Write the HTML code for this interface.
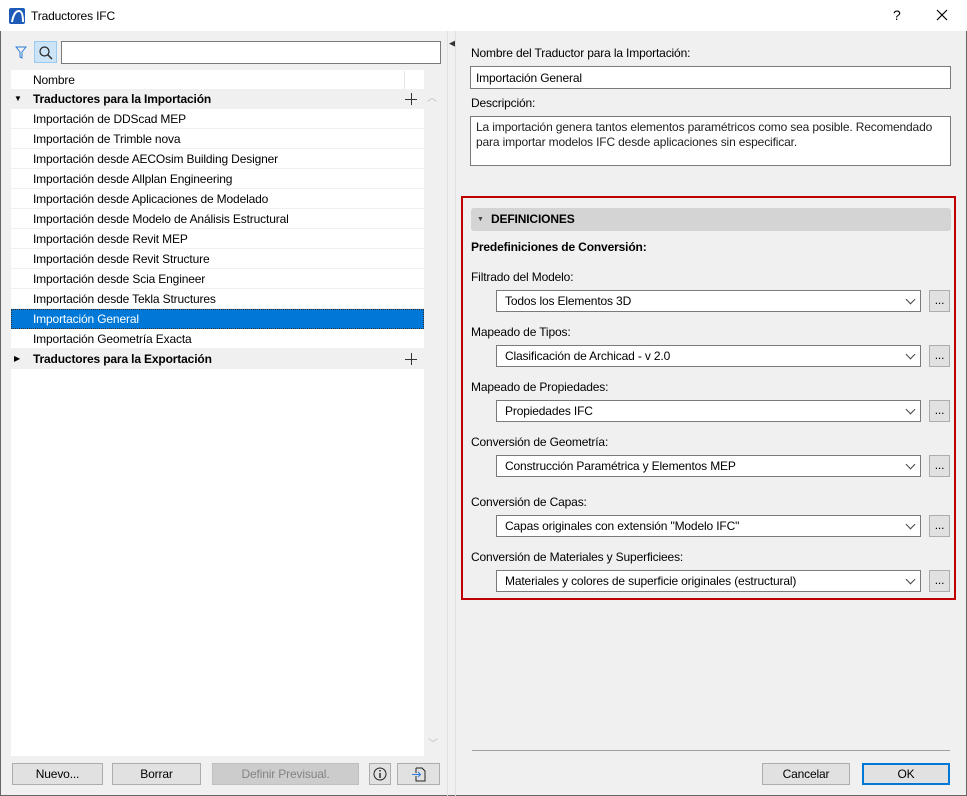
<!DOCTYPE html><html><head><meta charset="utf-8"><style>
*{box-sizing:border-box;margin:0;padding:0}
body{width:967px;height:796px;background:#f0f0f0;font-family:"Liberation Sans",sans-serif;font-size:12px;letter-spacing:-0.15px;color:#000;position:relative;overflow:hidden}
.a{position:absolute}
.t{position:absolute;white-space:nowrap;line-height:14px}
.row{position:absolute;left:11px;width:413px;height:20px;line-height:20px;padding-left:22px;border-bottom:1px solid #f0f0f0;background:#fff;white-space:nowrap}
.grp{background:#f0f0f0;font-weight:bold}
.inp{position:absolute;background:#fff;border:1px solid #7a7a7a}
.sel{position:absolute;left:496px;width:425px;height:22px;background:#fff;border:1px solid #7a7a7a;padding-left:8px;line-height:20px}
.sel:after{content:"";position:absolute;right:6px;top:5px;width:6px;height:6px;border-right:1px solid #444;border-bottom:1px solid #444;transform:rotate(45deg)}
.dots{position:absolute;left:929px;width:21px;height:22px;background:#e1e1e1;border:1px solid #adadad;text-align:center;line-height:18px}
.btn{position:absolute;top:763px;height:22px;background:#e1e1e1;border:1px solid #adadad;text-align:center;line-height:20px}
.plus{position:absolute;width:12px;height:12px}
.plus:before{content:"";position:absolute;left:0;top:5.5px;width:12px;height:1px;background:#333}
.plus:after{content:"";position:absolute;left:5.5px;top:0;width:1px;height:12px;background:#333}
</style></head><body>
<div class="a" style="left:0;top:0;width:967px;height:31px;background:#fff"></div>
<svg class="a" style="left:9px;top:8px" width="16" height="16"><rect width="16" height="16" rx="2" fill="#1e5bb8"/><path d="M3 14 Q5 3 10 3 Q14 3 14 14" stroke="#fff" stroke-width="2" fill="none"/></svg>
<div class="t" style="left:31px;top:9px">Traductores IFC</div>
<div class="t" style="left:893px;top:8px;font-size:14px">?</div>
<svg class="a" style="left:936px;top:9px" width="12" height="12"><path d="M1 1L11 11M11 1L1 11" stroke="#000" stroke-width="1.2"/></svg>
<div class="a" style="left:0;top:31px;width:1px;height:765px;background:#666"></div>
<div class="a" style="left:966px;top:31px;width:1px;height:765px;background:#666"></div>
<div class="a" style="left:0;top:795px;width:967px;height:1px;background:#666"></div>
<!-- left -->
<svg class="a" style="left:15px;top:46px" width="12" height="14"><path d="M1 1H11L7 6V12L5 11V6Z" stroke="#2a7ad8" fill="none"/></svg>
<div class="a" style="left:34px;top:41px;width:23px;height:22px;background:#cce4f7;border:1px solid #99c9ef"></div>
<svg class="a" style="left:38px;top:45px" width="16" height="16"><circle cx="6.5" cy="6.5" r="4.5" stroke="#222" fill="none" stroke-width="1.2"/><path d="M10 10L14 14" stroke="#222" stroke-width="1.3"/></svg>
<div class="inp" style="left:61px;top:41px;width:380px;height:23px"></div>
<div class="a" style="left:11px;top:70px;width:413px;height:686px;background:#fff"></div>
<div class="a" style="left:424px;top:89px;width:16px;height:667px;background:#f0f0f0"></div>
<div class="t" style="left:449px;top:36px;font-size:9px;color:#333">◀</div>
<div class="a" style="left:404px;top:71px;width:1px;height:18px;background:#e5e5e5"></div>
<div class="t" style="left:33px;top:73px">Nombre</div>
<div class="row grp" style="top:89px">Traductores para la Importación</div>
<div class="t" style="left:14px;top:92px;font-size:8px">▼</div>
<div class="plus" style="left:405px;top:93px"></div>
<div class="t" style="left:427px;top:92px;color:#bbb;font-size:10px">︿</div>
<div class="row" style="top:109px">Importación de DDScad MEP</div>
<div class="row" style="top:129px">Importación de Trimble nova</div>
<div class="row" style="top:149px">Importación desde AECOsim Building Designer</div>
<div class="row" style="top:169px">Importación desde Allplan Engineering</div>
<div class="row" style="top:189px">Importación desde Aplicaciones de Modelado</div>
<div class="row" style="top:209px">Importación desde Modelo de Análisis Estructural</div>
<div class="row" style="top:229px">Importación desde Revit MEP</div>
<div class="row" style="top:249px">Importación desde Revit Structure</div>
<div class="row" style="top:269px">Importación desde Scia Engineer</div>
<div class="row" style="top:289px">Importación desde Tekla Structures</div>
<div class="row" style="top:309px;background:#0078d7;color:#fff;outline:1px dotted #333;outline-offset:-1px;border-bottom-color:#0078d7">Importación General</div>
<div class="row" style="top:329px">Importación Geometría Exacta</div>
<div class="row grp" style="top:349px">Traductores para la Exportación</div>
<div class="t" style="left:14px;top:352px;font-size:8px">▶</div>
<div class="plus" style="left:405px;top:353px"></div>
<div class="t" style="left:428px;top:738px;color:#bbb;font-size:10px">﹀</div>
<div class="a" style="left:447px;top:31px;width:1px;height:765px;background:#e0e0e0"></div>
<div class="a" style="left:455px;top:31px;width:1px;height:765px;background:#e0e0e0"></div>
<div class="btn" style="left:12px;width:91px">Nuevo...</div>
<div class="btn" style="left:112px;width:89px">Borrar</div>
<div class="btn" style="left:212px;width:147px;background:#ccc;border-color:#bfbfbf;color:#838383">Definir Previsual.</div>
<div class="btn" style="left:369px;width:22px"><svg width="14" height="14" style="margin-top:3px"><circle cx="7" cy="7" r="6" stroke="#222" fill="none"/><path d="M7 6V11M7 3V4.5" stroke="#222" stroke-width="1.4"/></svg></div>
<div class="btn" style="left:397px;width:43px"><svg width="16" height="16" style="margin-top:2px"><path d="M5 2H11L14 5V15H5V10M5 7V2" stroke="#222" fill="none"/><path d="M1 8.5H9M7 6L9.5 8.5L7 11" stroke="#2a7ad8" fill="none"/></svg></div>
<!-- right -->
<div class="t" style="left:471px;top:46px">Nombre del Traductor para la Importación:</div>
<div class="inp" style="left:470px;top:66px;width:481px;height:23px;padding:4px 5px">Importación General</div>
<div class="t" style="left:471px;top:96px">Descripción:</div>
<div class="inp" style="left:470px;top:116px;width:481px;height:50px;padding:3px 5px;line-height:15px;color:#222">La importación genera tantos elementos paramétricos como sea posible. Recomendado<br>para importar modelos IFC desde aplicaciones sin especificar.</div>
<div class="a" style="left:461px;top:196px;width:495px;height:404px;border:2px solid #c00000"></div>
<div class="a" style="left:471px;top:208px;width:480px;height:23px;background:#d4d4d4;border-radius:3px"></div>
<div class="t" style="left:477px;top:213px;font-size:7px;color:#444">▼</div>
<div class="t" style="left:491px;top:212px;font-weight:bold">DEFINICIONES</div>
<div class="t" style="left:471px;top:240px;font-weight:bold">Predefiniciones de Conversión:</div>
<div class="t" style="left:471px;top:270px">Filtrado del Modelo:</div>
<div class="sel" style="top:290px">Todos los Elementos 3D</div><div class="dots" style="top:290px">...</div>
<div class="t" style="left:471px;top:325px">Mapeado de Tipos:</div>
<div class="sel" style="top:345px">Clasificación de Archicad - v 2.0</div><div class="dots" style="top:345px">...</div>
<div class="t" style="left:471px;top:380px">Mapeado de Propiedades:</div>
<div class="sel" style="top:400px">Propiedades IFC</div><div class="dots" style="top:400px">...</div>
<div class="t" style="left:471px;top:435px">Conversión de Geometría:</div>
<div class="sel" style="top:455px">Construcción Paramétrica y Elementos MEP</div><div class="dots" style="top:455px">...</div>
<div class="t" style="left:471px;top:495px">Conversión de Capas:</div>
<div class="sel" style="top:515px">Capas originales con extensión "Modelo IFC"</div><div class="dots" style="top:515px">...</div>
<div class="t" style="left:471px;top:550px">Conversión de Materiales y Superficiees:</div>
<div class="sel" style="top:570px">Materiales y colores de superficie originales (estructural)</div><div class="dots" style="top:570px">...</div>
<div class="a" style="left:472px;top:750px;width:478px;height:1px;background:#a0a0a0"></div>
<div class="btn" style="left:762px;width:88px">Cancelar</div>
<div class="btn" style="left:862px;width:88px;border:2px solid #0078d7;line-height:18px">OK</div>
</body></html>
